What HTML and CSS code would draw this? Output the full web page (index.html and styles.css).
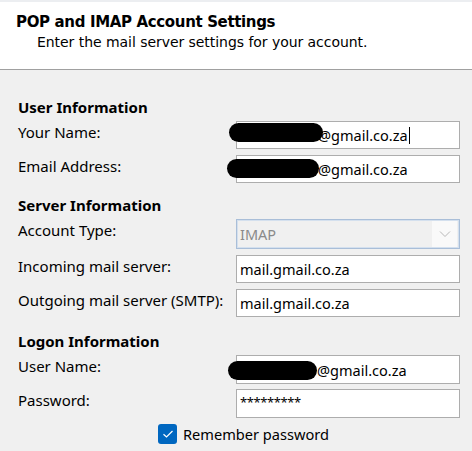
FILE: index.html
```html
<!DOCTYPE html>
<html lang="en">
<head>
<meta charset="utf-8">
<title>POP and IMAP Account Settings</title>
<link rel="stylesheet" href="styles.css">
</head>
<body>
<div class="top-strip"></div>
<header class="head">
  <h1 class="head-title">POP and IMAP Account Settings</h1>
  <p class="head-sub">Enter the mail server settings for your account.</p>
</header>
<main class="form">
  <section class="section">
    <h2 class="section-title">User Information</h2>
    <div class="row">
      <span class="label">Your Name:</span>
      <div class="field">
        <span class="redact redact-1"></span>
        <span class="value value-redacted-1">@gmail.co.za</span><span class="caret"></span>
      </div>
    </div>
    <div class="row">
      <span class="label">Email Address:</span>
      <div class="field">
        <span class="redact redact-2"></span>
        <span class="value value-redacted-2">@gmail.co.za</span>
      </div>
    </div>
  </section>
  <section class="section section-server">
    <h2 class="section-title">Server Information</h2>
    <div class="row">
      <span class="label">Account Type:</span>
      <div class="select">
        <span class="select-value">IMAP</span>
        <span class="select-btn">
          <svg width="12" height="8" viewBox="0 0 12 8"><path d="M1 1.5 L6 6.5 L11 1.5" fill="none" stroke="#b8b8b8" stroke-width="1"/></svg>
        </span>
      </div>
    </div>
    <div class="row">
      <span class="label">Incoming mail server:</span>
      <div class="field"><span class="value">mail.gmail.co.za</span></div>
    </div>
    <div class="row">
      <span class="label">Outgoing mail server (SMTP):</span>
      <div class="field"><span class="value">mail.gmail.co.za</span></div>
    </div>
  </section>
  <section class="section section-logon">
    <h2 class="section-title">Logon Information</h2>
    <div class="row">
      <span class="label">User Name:</span>
      <div class="field field-tall">
        <span class="redact redact-3"></span>
        <span class="value value-redacted-3">@gmail.co.za</span>
      </div>
    </div>
    <div class="row">
      <span class="label">Password:</span>
      <div class="field field-tall"><span class="value password">*********</span></div>
    </div>
  </section>
  <div class="remember">
    <span class="checkbox">
      <svg width="12" height="10" viewBox="0 0 12 10"><path d="M1.5 5.2 L4.5 8 L10.5 2" fill="none" stroke="#ffffff" stroke-width="1.2"/></svg>
    </span>
    <span class="remember-text">Remember password</span>
  </div>
</main>
</body>
</html>
```
FILE: styles.css
```css
* { box-sizing: border-box; }
html, body { margin: 0; padding: 0; }
body {
  background: #f0f0f0;
  font-family: "Noto Sans", "Open Sans", sans-serif;
  font-size: 15px;
  color: #000;
  width: 472px;
  height: 451px;
  overflow: hidden;
}
.top-strip { height: 2px; background: #eceef1; }
.head {
  background: #ffffff;
  height: 68px;
  border-bottom: 1px solid #a0a0a0;
  padding: 11px 0 0 16px;
  font-family: "DejaVu Sans", Tahoma, sans-serif;
}
.head-title {
  margin: 0;
  font-size: 15px;
  font-weight: bold;
  line-height: 19px;
  letter-spacing: -0.35px;
}
.head-sub {
  margin: 1px 0 0 21px;
  font-size: 14px;
  line-height: 19px;
  letter-spacing: -0.05px;
}
.form { padding: 27px 12px 0 18px; }
.section { display: flex; flex-direction: column; gap: 6px; }
.section-server { margin-top: 12px; }
.section-logon { margin-top: 14px; gap: 5px; }
.section-logon .section-title { margin-bottom: -1px; }
.section-title {
  margin: 0 0 -2px 0;
  font-size: 15px;
  font-weight: bold;
  line-height: 20px;
}
.row {
  display: grid;
  grid-template-columns: 218px 224px;
  align-items: start;
}
.label { line-height: 20px; padding-top: 1px; white-space: nowrap; }
.field {
  position: relative;
  height: 28px;
  background: #ffffff;
  border: 1px solid #adadad;
  display: flex;
  align-items: center;
  padding-left: 3px;
  white-space: nowrap;
  font-size: 14.5px;
}
.field-tall { height: 29px; }
.value { line-height: 20px; }
.value-redacted-1 { padding-left: 78px; }
.value-redacted-2 { padding-left: 78px; }
.value-redacted-3 { padding-left: 77px; }
.caret { display: inline-block; width: 1px; height: 17px; background: #000; margin-left: 1px; }
.redact {
  position: absolute;
  background: #000;
  border-radius: 10px;
  height: 19px;
}
.redact-1 { left: -8px; top: 1px; width: 94px; }
.redact-2 { left: -10px; top: 3px; width: 92px; }
.redact-3 { left: -9px; top: 5px; width: 89px; }
.password { font-size: 13px; letter-spacing: -0.4px; align-self: flex-start; padding-top: 2px; }
.select {
  height: 30px;
  background: #f0f0f0;
  border: 1px solid #a9bed8;
  box-shadow: inset 0 0 0 1px #d4e0ee;
  display: flex;
  align-items: center;
  padding-left: 3px;
  font-size: 14.5px;
}
.select-value { color: #8a8a8a; flex: 1; line-height: 20px; }
.select-btn {
  width: 25px;
  height: 26px;
  margin-right: 2px;
  background: #f9f9f9;
  display: flex;
  align-items: center;
  justify-content: center;
}
.remember {
  display: flex;
  align-items: center;
  gap: 6px;
  margin: 6px 0 0 140px;
}
.checkbox {
  width: 19px;
  height: 20px;
  background: #0067c0;
  border-radius: 3px;
  display: flex;
  align-items: center;
  justify-content: center;
}
.remember-text { line-height: 20px; font-size: 14.6px; }
```
